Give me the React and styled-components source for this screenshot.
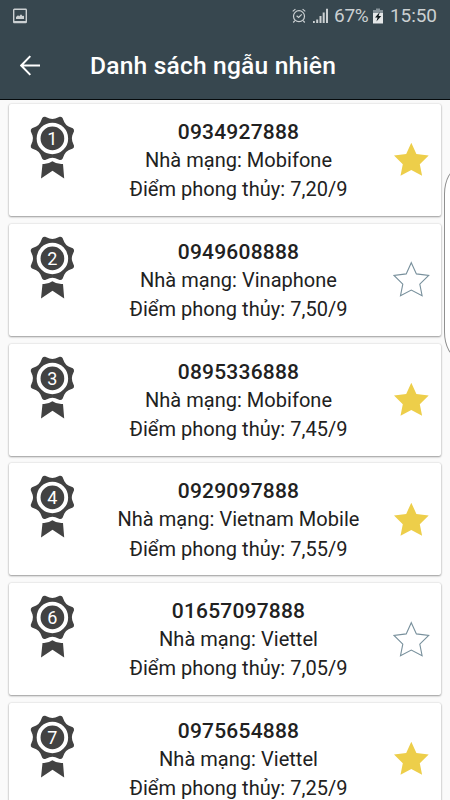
import React from "react";
import styled, { createGlobalStyle } from "styled-components";

const Global = createGlobalStyle`
  * { box-sizing: border-box; }
  html, body { margin: 0; background: #fafafa; overflow: hidden; }
  body { font-family: Roboto, "Noto Sans", sans-serif; color: #212121; }
  svg { display: block; flex: none; }
`;

const Screen = styled.main`
  position: relative;
  width: 450px;
  height: 800px;
  overflow: hidden;
  background: #fafafa;
  display: flex;
  flex-direction: column;
`;

const Header = styled.header`
  flex: none;
  height: 100px;
  background: #37474f;
  border-bottom: 1px solid #050a0c;
`;

const StatusBar = styled.div`
  height: 32px;
  display: flex;
  align-items: center;
  padding: 0 14px 0 13px;
  color: #cbd0d2;
  font-size: 19px;
  line-height: 32px;
`;

const StatusIcons = styled.div`
  margin-left: auto;
  display: flex;
  align-items: center;
`;

const Percent = styled.span`
  margin-left: 5px;
  width: 36px;
  white-space: nowrap;
  letter-spacing: -0.25px;
`;

const Clock = styled.span`
  margin-left: 7px;
  width: 46px;
  white-space: nowrap;
  letter-spacing: -0.1px;
`;

const BatteryIcon = styled.svg`
  margin-left: 3px;
`;

const SignalIcon = styled.svg`
  margin-left: 7px;
`;

const AppBar = styled.div`
  height: 67px;
  display: flex;
  align-items: center;
  padding-left: 20px;
`;

const Title = styled.h1`
  margin: 1px 0 0 49px;
  color: #fff;
  font-size: 24.6px;
  font-weight: 500;
  line-height: 32px;
  white-space: nowrap;
  letter-spacing: 0.18px;
`;

const List = styled.div`
  display: flex;
  flex-direction: column;
  gap: 7.8px;
  padding: 4px 9px 0;
`;

const Card = styled.article`
  flex: none;
  height: 112px;
  display: grid;
  grid-template-columns: 86px 1fr 60px;
  background: #fff;
  border-radius: 2px;
  box-shadow: 0 1px 2px rgba(0, 0, 0, 0.36), 0 0 2px rgba(0, 0, 0, 0.16);
`;

const MedalCell = styled.div`
  padding: 10px 0 0 20px;
`;

const Details = styled.div`
  display: flex;
  flex-direction: column;
  align-items: center;
  padding: 14px 0 0 1px;
`;

const PhoneNumber = styled.div`
  font-size: 21px;
  font-weight: 500;
  line-height: 28px;
  letter-spacing: 0.2px;
  white-space: nowrap;
`;

const Info = styled.div`
  font-size: 20px;
  line-height: 29.3px;
  letter-spacing: 0.03px;
  white-space: nowrap;
`;

const StarCell = styled.div`
  padding: 37.4px 0 0 12px;
`;

const EdgePanel = styled.div`
  position: absolute;
  left: 444px;
  top: 168px;
  width: 30px;
  height: 190px;
  border: 1px solid #8f8f8f;
  border-radius: 15px / 26px;
  background: #fff;
`;

const rosette = Array.from({ length: 8 }, (_, i) => {
  const at = (deg, r) => {
    const a = (deg * Math.PI) / 180;
    return `${(23.4 + r * Math.cos(a)).toFixed(2)} ${(24.4 + r * Math.sin(a)).toFixed(2)}`;
  };
  const c = i * 45 + 22.5;
  return `${i === 0 ? "M" : "L"}${at(c - 4, 22.8)}Q${at(c, 23.7)} ${at(c + 4, 22.8)}L${at(c + 14, 20.1)}Q${at(c + 22.5, 18.9)} ${at(c + 31, 20.1)}`;
}).join("") + "Z";

function Medal({ rank }) {
  return (
    <svg width="48" height="70" viewBox="0 0 48 70">
      <path d={rosette} fill="#424242" />
      <circle cx="23.4" cy="24.4" r="13.8" fill="#424242" stroke="#fff" strokeWidth="3.9" />
      <path d="M13.5 49.9Q19.2 50.4 23.4 47.3Q27.6 50.4 34 49.9L35.2 64.4L23.5 56.8L12 64.4Z" fill="#424242" />
      <text x="23.4" y="30.8" fill="#fff" fontSize="18" textAnchor="middle">{rank}</text>
    </svg>
  );
}

function Star({ filled }) {
  return (
    <svg width="38" height="38" viewBox="0 0 38 38">
      <path
        d="M18.3 1.7L23.4 12.9L35.7 14.4L26.8 23.2L29.1 34.7L18.3 29.1L7.5 34.7L9.8 23.2L1 14.4L13.2 12.9Z"
        fill={filled ? "#edce4a" : "none"}
        stroke={filled ? "none" : "#78909c"}
        strokeWidth="1.1"
      />
    </svg>
  );
}

const entries = [
  { rank: 1, phone: "0934927888", carrier: "Mobifone", score: "7,20", saved: true },
  { rank: 2, phone: "0949608888", carrier: "Vinaphone", score: "7,50", saved: false },
  { rank: 3, phone: "0895336888", carrier: "Mobifone", score: "7,45", saved: true },
  { rank: 4, phone: "0929097888", carrier: "Vietnam Mobile", score: "7,55", saved: true },
  { rank: 6, phone: "01657097888", carrier: "Viettel", score: "7,05", saved: false },
  { rank: 7, phone: "0975654888", carrier: "Viettel", score: "7,25", saved: true },
];

export default function App() {
  return (
    <Screen>
      <Global />
      <Header>
        <StatusBar>
          <svg width="14" height="16" viewBox="0 0 14 16">
            <rect x="0.7" y="1.2" width="12.6" height="13.4" rx="0.7" fill="none" stroke="#cbd0d2" strokeWidth="1.4" />
            <path d="M3 11V9L5 7.3L6.2 8.2L8 6.3L9.5 8L11 7.7V11ZM1 13H13V15H1Z" fill="#cbd0d2" />
          </svg>
          <StatusIcons>
            <svg width="14" height="16" viewBox="0 0 14 16" fill="none" stroke="#cbd0d2" strokeWidth="1.2">
              <circle cx="7" cy="8.2" r="5.5" />
              <path d="M0.7 3.4L3.4 1.1M10.6 1.1L13.3 3.4M2.8 12.7L1.3 14.5M11.2 12.7L12.7 14.5M4.6 7.8L6.6 9.5L9.8 6.3" />
            </svg>
            <SignalIcon width="16" height="16" viewBox="0 0 16 16" fill="#cbd0d2">
              <path d="M0 13H1.8V15H0ZM3.2 11.5H5.2V15H3.2ZM6.5 8H8.5V15H6.5ZM9.7 4.5H11.7V15H9.7ZM13 0.7H15V15H13Z" />
            </SignalIcon>
            <Percent>67%</Percent>
            <BatteryIcon width="10" height="16" viewBox="0 0 10 16">
              <path d="M3 0.5H7V2H10V5H0V2H3Z" fill="#87939a" />
              <path d="M0 5H10V15.5H0Z" fill="#e4e7e8" />
              <path d="M6.8 4L2 9.4H4.6L3.4 13.5L8.3 7.9H5.6Z" fill="#10191d" />
            </BatteryIcon>
            <Clock>15:50</Clock>
          </StatusIcons>
        </StatusBar>
        <AppBar>
          <svg width="21" height="22" viewBox="0 0 21 22" fill="none" stroke="#fff" strokeWidth="2">
            <path d="M20 10.5H2M10.3 1.1L1.2 10.5L10.3 19.9" />
          </svg>
          <Title>Danh sách ngẫu nhiên</Title>
        </AppBar>
      </Header>
      <List>
        {entries.map((entry) => (
          <Card key={entry.rank}>
            <MedalCell><Medal rank={entry.rank} /></MedalCell>
            <Details>
              <PhoneNumber>{entry.phone}</PhoneNumber>
              <Info>Nhà mạng: {entry.carrier}</Info>
              <Info>Điểm phong thủy: {entry.score}/9</Info>
            </Details>
            <StarCell><Star filled={entry.saved} /></StarCell>
          </Card>
        ))}
      </List>
      <EdgePanel />
    </Screen>
  );
}
